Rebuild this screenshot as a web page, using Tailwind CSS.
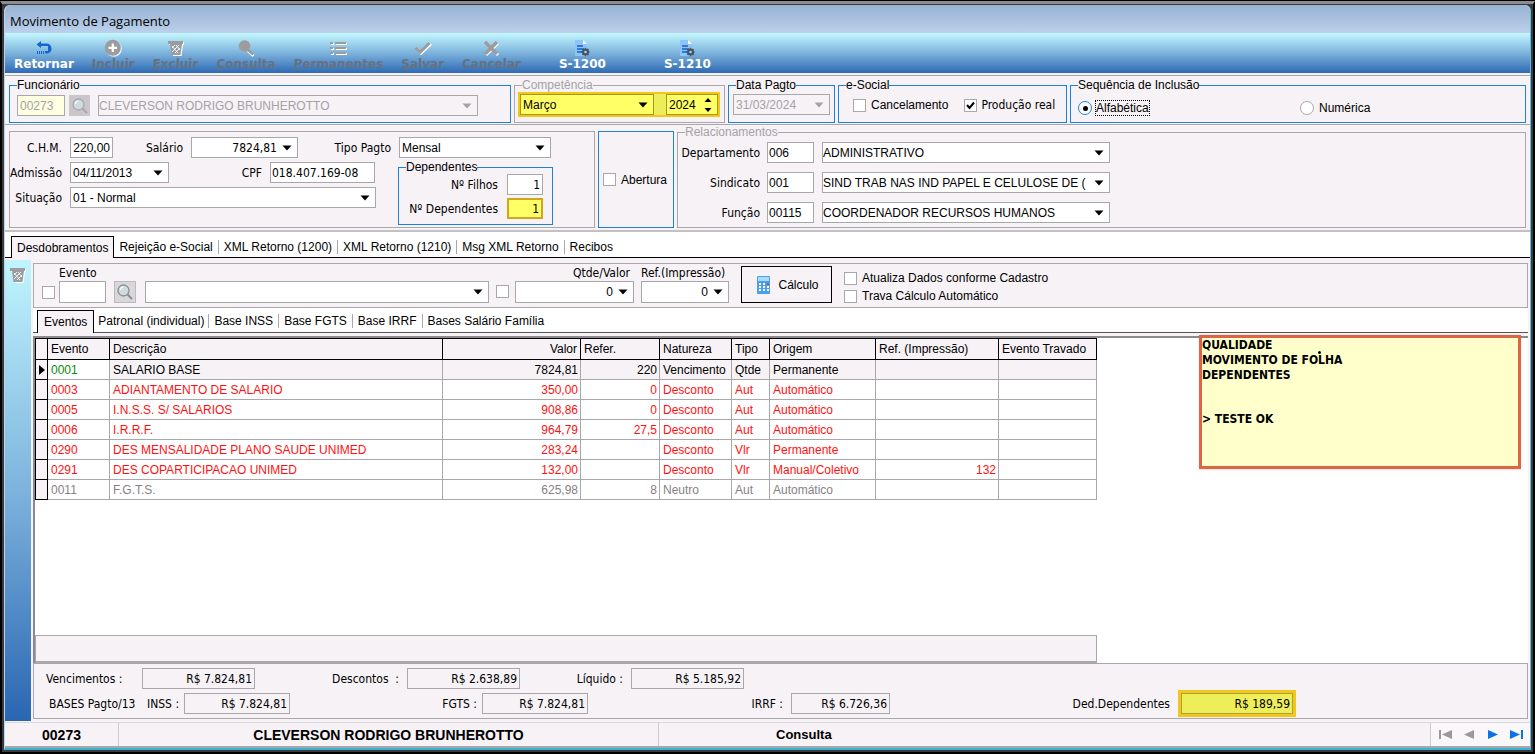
<!DOCTYPE html>
<html lang="pt-BR">
<head>
    <meta charset="UTF-8">
    <meta name="viewport" content="width=device-width, initial-scale=1.0">
    <title>Movimento de Pagamento</title>
    <script src="https://cdn.jsdelivr.net/npm/@tailwindcss/browser@4"></script>
</head>
<body class="flex min-h-screen flex-col bg-black pt-px font-['Liberation_Sans',sans-serif] text-[12px] leading-[14px] text-black">
    <!-- Shared icons -->
    <svg class="hidden">
        <symbol id="arrow" viewBox="0 0 10 6"><path d="M0.5 0.5h9L5 5.5z" fill="currentColor"/></symbol>
        <symbol id="trash" viewBox="0 0 18 18">
            <path d="M2 3h15v3h-1l-1.500 11h-8.500L4 6H2z" fill="#fff"/>
            <path d="M1 2h15v3h-1l-1.500 11h-9L3 5H1z" fill="#9c9c9f"/>
            <path d="M5 7l6 7M9 6l4 5M12 6l-7 7M8 6l-3 3M13 9l-5 5" stroke="#e8f4f8" stroke-width="1"/>
        </symbol>
        <symbol id="doc" viewBox="0 0 18 18">
            <path d="M2 1h8l4 4v12H2z" fill="#8cc4fb"/>
            <path d="M10 1l4 4h-4z" fill="#fff"/>
            <path d="M4 7h6M4 10h7M4 13h5" stroke="#1461c4" stroke-width="1.500"/>
            <circle cx="12.500" cy="13" r="2.500" fill="none" stroke="#46535f" stroke-width="2"/>
            <path d="M12.500 8.800v8.400M8.300 13h8.400M9.500 10l6 6M15.500 10l-6 6" stroke="#46535f" stroke-width="1.200"/>
            <circle cx="12.500" cy="13" r="1.300" fill="#a9d0ef"/>
        </symbol>
        <symbol id="lens" viewBox="0 0 18 18">
            <path d="M11 11l5 5" stroke="currentColor" stroke-width="2"/>
            <circle cx="7.500" cy="7.500" r="5.500" fill="#cfdcdf" stroke="currentColor" stroke-width="1.300"/>
            <path d="M4.500 7a3 3 0 0 1 3-3" fill="none" stroke="#fff" stroke-width="1.200"/>
        </symbol>
    </svg>

    <div class="flex flex-1 flex-col border-x-2 border-b-2 border-t-[3px] border-black border-t-[#8e8b90] bg-[#3c3a3e] px-[2px] pt-px pb-[2px]">
        <div class="flex flex-1 flex-col rounded-t-md border-x border-b-2 border-l-[#b8d4ee] border-r-[#4fc3e0] border-b-[#35b5d3] bg-[#f6f2f6]">
            <h1 class="flex h-7 shrink-0 items-center rounded-t-md bg-linear-to-b from-[#98b2d2] to-[#bbd1ec] pl-[5px] pt-1 font-['Open_Sans',sans-serif] text-[13px]">Movimento de Pagamento</h1>

            <!-- Toolbar -->
            <nav class="flex h-10 shrink-0 items-start gap-[18px] bg-linear-to-b from-[#c4f8fe] via-[#7db3dc] to-[#2e69b4] pl-[9px] pt-[6px] font-['DejaVu_Sans',sans-serif] text-[12px] font-bold text-[#66727d]">
                <button class="flex flex-col items-center text-white">
                    <svg class="size-[18px]" viewBox="0 0 18 18"><path d="M6 2L1.500 5.500 6 9V7h7v5h-3v2.500h2a4.500 4.500 0 0 0 4.500-4.700A5 5 0 0 0 12 4.500H6z" fill="#1467cf"/><path d="M2.500 12v3M4.500 12v3M6.500 12v3M8.500 12v3" stroke="#1467cf"/></svg>
                    <span>Retornar</span>
                </button>
                <button class="flex flex-col items-center" disabled>
                    <svg class="size-[18px]" viewBox="0 0 18 18"><circle cx="9.800" cy="9.800" r="8" fill="#e9f4fa"/><circle cx="8.800" cy="8.800" r="8" fill="#9c9c9f"/><path d="M8.800 4.500v8.600M4.500 8.800h8.600" stroke="#fff" stroke-width="2.200"/></svg>
                    <span><u>I</u>ncluir</span>
                </button>
                <button class="flex flex-col items-center" disabled>
                    <svg class="size-[18px]"><use href="#trash"/></svg>
                    <span><u>E</u>xcluir</span>
                </button>
                <button class="flex flex-col items-center" disabled>
                    <svg class="size-[18px]" viewBox="0 0 18 18"><path d="M11 12l5.500 5" stroke="#fff" stroke-width="2.500"/><path d="M10 10l6 5.500" stroke="#9c9c9f" stroke-width="2.500"/><circle cx="7.500" cy="7" r="5.800" fill="#9c9c9f"/></svg>
                    <span><u>C</u>onsulta</span>
                </button>
                <button class="flex flex-col items-center" disabled>
                    <svg class="size-[18px]" viewBox="0 0 18 18"><path d="M2 5h3M7 5h11M2 10h3M7 10h11M2 15h3M7 15h11" stroke="#fff" stroke-width="2"/><path d="M1 4h3M6 4h11M1 9h3M6 9h11M1 14h3M6 14h11" stroke="#9c9c9f" stroke-width="2"/></svg>
                    <span><u>P</u>ermanentes</span>
                </button>
                <button class="flex flex-col items-center" disabled>
                    <svg class="size-[18px]" viewBox="0 0 18 18"><path d="M2.500 10l4.500 4.500L17 5" fill="none" stroke="#fff" stroke-width="2.500"/><path d="M1.500 9L6 13.500 15.500 4" fill="none" stroke="#9c9c9f" stroke-width="3"/></svg>
                    <span><u>S</u>alvar</span>
                </button>
                <button class="flex flex-col items-center" disabled>
                    <svg class="size-[18px]" viewBox="0 0 18 18"><path d="M4 4l12 12M16 4L4 16" stroke="#fff" stroke-width="3"/><path d="M3 3l12 12M15 3L3 15" stroke="#9c9c9f" stroke-width="3.500"/></svg>
                    <span>Cancelar</span>
                </button>
                <button class="flex flex-col items-center px-5 text-white">
                    <svg class="size-[18px]"><use href="#doc"/></svg>
                    <span>S-1200</span>
                </button>
                <button class="flex flex-col items-center px-5 text-white">
                    <svg class="size-[18px]"><use href="#doc"/></svg>
                    <span>S-1210</span>
                </button>
            </nav>

            <!-- Filters -->
            <form class="mt-[2px] flex h-[50px] shrink-0 gap-[3px] border-y border-[#aaa7ab] px-1 pt-[2px] pb-px">
                <fieldset class="w-[502px] border border-[#1c82d8] pl-[7px] pr-8">
                    <legend>Funcionário</legend>
                    <div class="flex items-center gap-1 pt-[3px]">
                        <input aria-label="Código" value="00273" disabled class="h-[21px] w-12 border border-[#aaa7ab] bg-[#ffffe1] px-[2px] text-[#a5a2a6]">
                        <button type="button" aria-label="Buscar funcionário" disabled class="flex size-[21px] items-center justify-center bg-[#c9c7ca] text-[#aaa7ab]"><svg class="size-[18px]"><use href="#lens"/></svg></button>
                        <div class="relative ml-1 flex-1">
                            <select aria-label="Funcionário" disabled class="h-[21px] w-full appearance-none border border-[#aaa7ab] px-0 text-[#a5a2a6] opacity-100"><option>CLEVERSON RODRIGO BRUNHEROTTO</option></select>
                            <svg class="pointer-events-none absolute right-[6px] top-2 h-[6px] w-[10px] text-[#a5a2a6]"><use href="#arrow"/></svg>
                        </div>
                    </div>
                </fieldset>
                <fieldset class="w-[211px] border border-[#aaa7ab] pl-[3px] pr-1">
                    <legend class="ml-1 text-[#a5a2a6]">Competência</legend>
                    <div class="flex items-center gap-3 border-2 border-[#f5c61a] bg-[#eded5a]">
                        <div class="relative flex-1">
                            <select aria-label="Mês" class="h-[21px] w-full appearance-none border border-[#a09a20] bg-[#ffff66] px-[2px]"><option>Março</option></select>
                            <svg class="pointer-events-none absolute right-[6px] top-2 h-[6px] w-[10px]"><use href="#arrow"/></svg>
                        </div>
                        <div class="relative w-[52px]">
                            <input aria-label="Ano" value="2024" class="h-[21px] w-full border border-[#a09a20] bg-[#ffff66] px-[2px]">
                            <svg class="pointer-events-none absolute right-[6px] top-1 h-[14px] w-[8px]" viewBox="0 0 8 14"><path d="M4 0l3.500 4h-7zM4 14l3.500-4h-7z"/></svg>
                        </div>
                    </div>
                </fieldset>
                <fieldset class="w-[107px] border border-[#1c82d8] px-[4px]">
                    <legend class="ml-[3px]">Data Pagto</legend>
                    <div class="relative pt-[2px]">
                        <input aria-label="Data Pagto" value="31/03/2024" disabled class="h-[21px] w-full border border-[#aaa7ab] px-[2px] text-[#a5a2a6]">
                        <svg class="pointer-events-none absolute right-[6px] top-[10px] h-[6px] w-[10px] text-[#a5a2a6]"><use href="#arrow"/></svg>
                    </div>
                </fieldset>
                <fieldset class="w-[229px] border border-[#1c82d8] pl-[14px]">
                    <legend class="-ml-[7px]">e-Social</legend>
                    <div class="flex items-center gap-4 pt-[6px]">
                        <label class="flex items-center gap-[5px]"><input type="checkbox" class="size-[13px] appearance-none border border-[#aaa7ab] bg-white">Cancelamento</label>
                        <label class="relative flex items-center gap-1 font-['DejaVu_Sans_Condensed','Noto_Sans',sans-serif] text-[12px]">
                            <input type="checkbox" checked class="size-[13px] appearance-none border border-[#aaa7ab] bg-white">
                            <svg class="pointer-events-none absolute left-px top-[2px] size-[11px]" viewBox="0 0 11 11"><path d="M2 5l2.500 3L9 2.500" fill="none" stroke="#000" stroke-width="2"/></svg>
                            Produção real
                        </label>
                    </div>
                </fieldset>
                <fieldset class="flex-1 border border-[#1c82d8] pl-[7px]">
                    <legend>Sequência de Inclusão</legend>
                    <div class="flex items-center pt-[9px]">
                        <label class="flex w-[222px] items-center gap-1"><input type="radio" name="seq" checked class="flex size-[14px] appearance-none items-center justify-center rounded-full border border-[#1c82d8] bg-white before:size-[5px] before:rounded-full before:bg-black before:content-['']"><span class="outline outline-dotted outline-black">Alfabética</span></label>
                        <label class="flex items-center gap-[5px]"><input type="radio" name="seq" class="size-[14px] appearance-none rounded-full border border-[#aaa7ab] bg-white">Numérica</label>
                    </div>
                </fieldset>
            </form>

            <!-- Employee data -->
            <form class="flex h-[107px] shrink-0 gap-[3px] border-b-2 border-[#c3c0c4] pl-1 pr-1 font-['DejaVu_Sans_Condensed','Noto_Sans',sans-serif] text-[12px]">
                <div class="mt-[6px] mb-[2px] w-[586px] border border-[#aaa7ab] pt-[5px]">
                    <div class="flex items-center">
                        <label for="chm" class="w-[52px] text-right">C.H.M.</label>
                        <input id="chm" value="220,00" class="ml-2 h-[21px] w-[43px] border border-[#aaa7ab] bg-white px-[2px] text-right font-['Liberation_Sans']">
                        <label for="sal" class="w-[70px] text-right">Salário</label>
                        <div class="relative ml-2 w-[107px]">
                            <input id="sal" value="7824,81" class="h-[21px] w-full border border-[#aaa7ab] bg-white pr-5 text-right">
                            <svg class="pointer-events-none absolute right-[6px] top-2 h-[6px] w-[10px]"><use href="#arrow"/></svg>
                        </div>
                        <label for="tipo" class="w-[93px] text-right">Tipo Pagto</label>
                        <div class="relative ml-2 w-[152px]">
                            <select id="tipo" class="h-[21px] w-full appearance-none border border-[#aaa7ab] bg-white px-[2px] font-['Liberation_Sans']"><option>Mensal</option></select>
                            <svg class="pointer-events-none absolute right-[6px] top-2 h-[6px] w-[10px]"><use href="#arrow"/></svg>
                        </div>
                    </div>
                    <div class="flex">
                        <div class="flex w-[388px] flex-col gap-1 pt-1">
                            <div class="flex items-center">
                                <label for="adm" class="w-[52px] text-right">Admissão</label>
                                <div class="relative ml-2 w-[99px]">
                                    <input id="adm" value="04/11/2013" class="h-[21px] w-full border border-[#aaa7ab] bg-white px-[2px] font-['Liberation_Sans']">
                                    <svg class="pointer-events-none absolute right-[6px] top-2 h-[6px] w-[10px]"><use href="#arrow"/></svg>
                                </div>
                                <label for="cpf" class="w-[93px] text-right">CPF</label>
                                <input id="cpf" value="018.407.169-08" class="ml-2 h-[21px] w-[105px] border border-[#aaa7ab] bg-white px-px">
                            </div>
                            <div class="flex items-center">
                                <label for="sit" class="w-[52px] text-right">Situação</label>
                                <div class="relative ml-2 w-[306px]">
                                    <select id="sit" class="h-[21px] w-full appearance-none border border-[#aaa7ab] bg-white px-[2px] font-['Liberation_Sans']"><option>01 - Normal</option></select>
                                    <svg class="pointer-events-none absolute right-[6px] top-2 h-[6px] w-[10px]"><use href="#arrow"/></svg>
                                </div>
                            </div>
                        </div>
                        <fieldset class="mt-[2px] h-[65px] w-[155px] border border-[#1c82d8]">
                            <legend class="ml-[7px] font-['Liberation_Sans']">Dependentes</legend>
                            <div class="flex flex-col gap-[3px] pr-[9px]">
                                <div class="flex items-center justify-end gap-[9px]">
                                    <label for="filhos">Nº Filhos</label>
                                    <input id="filhos" value="1" class="h-[21px] w-9 border border-[#aaa7ab] bg-white px-[2px] text-right">
                                </div>
                                <div class="flex items-center justify-end gap-[9px]">
                                    <label for="deps">Nº Dependentes</label>
                                    <input id="deps" value="1" class="h-[21px] w-9 border-2 border-[#cfa61c] bg-[#ffff66] px-[2px] text-right">
                                </div>
                            </div>
                        </fieldset>
                    </div>
                </div>
                <div class="mt-[6px] mb-[2px] flex w-[76px] items-center border border-[#1c82d8] pl-1">
                    <label class="flex items-center gap-[5px] font-['Liberation_Sans']"><input type="checkbox" class="size-[13px] appearance-none border border-[#aaa7ab] bg-white">Abertura</label>
                </div>
                <fieldset class="mb-[2px] flex-1 border border-[#aaa7ab]">
                    <legend class="ml-[7px] font-['Liberation_Sans'] text-[#a5a2a6]">Relacionamentos</legend>
                    <div class="flex flex-col gap-[9px] pt-[3px]">
                        <div class="flex items-center">
                            <label for="dep" class="w-[82px] text-right">Departamento</label>
                            <input id="dep" value="006" class="ml-[7px] h-[21px] w-[47px] border border-[#aaa7ab] bg-white px-px font-['Liberation_Sans']">
                            <div class="relative ml-2 w-[288px]">
                                <select aria-label="Departamento" class="h-[21px] w-full appearance-none border border-[#aaa7ab] bg-white pl-0 pr-5 font-['Liberation_Sans']"><option>ADMINISTRATIVO</option></select>
                                <svg class="pointer-events-none absolute right-[6px] top-2 h-[6px] w-[10px]"><use href="#arrow"/></svg>
                            </div>
                        </div>
                        <div class="flex items-center">
                            <label for="sind" class="w-[82px] text-right">Sindicato</label>
                            <input id="sind" value="001" class="ml-[7px] h-[21px] w-[47px] border border-[#aaa7ab] bg-white px-px font-['Liberation_Sans']">
                            <div class="relative ml-2 w-[288px]">
                                <select aria-label="Sindicato" class="h-[21px] w-full appearance-none border border-[#aaa7ab] bg-white pl-0 pr-5 font-['Liberation_Sans']"><option>SIND TRAB NAS IND PAPEL E CELULOSE DE (</option></select>
                                <svg class="pointer-events-none absolute right-[6px] top-2 h-[6px] w-[10px]"><use href="#arrow"/></svg>
                            </div>
                        </div>
                        <div class="flex items-center">
                            <label for="func" class="w-[82px] text-right">Função</label>
                            <input id="func" value="00115" class="ml-[7px] h-[21px] w-[47px] border border-[#aaa7ab] bg-white px-px font-['Liberation_Sans']">
                            <div class="relative ml-2 w-[288px]">
                                <select aria-label="Função" class="h-[21px] w-full appearance-none border border-[#aaa7ab] bg-white pl-0 pr-5 font-['Liberation_Sans']"><option>COORDENADOR RECURSOS HUMANOS</option></select>
                                <svg class="pointer-events-none absolute right-[6px] top-2 h-[6px] w-[10px]"><use href="#arrow"/></svg>
                            </div>
                        </div>
                    </div>
                </fieldset>
            </form>

            <!-- Main tabs -->
            <div class="flex h-[26px] shrink-0 items-end bg-white" role="tablist">
                <div class="w-[6px] border-b border-black"></div>
                <button class="h-[22px] border border-b-0 border-black bg-[#f6f2f6] px-[5px]">Desdobramentos</button>
                <div class="flex h-[22px] flex-1 items-center border-b border-black">
                    <button class="px-[5px]">Rejeição e-Social</button>
                    <button class="border-l border-[#aaa7ab] px-[5px]">XML Retorno (1200)</button>
                    <button class="border-l border-[#aaa7ab] px-[5px]">XML Retorno (1210)</button>
                    <button class="border-l border-[#aaa7ab] px-[5px]">Msg XML Retorno</button>
                    <button class="border-l border-[#aaa7ab] px-[5px]">Recibos</button>
                </div>
            </div>

            <div class="mt-[2px] flex flex-1">
                <aside class="w-[26px] shrink-0 bg-linear-to-b from-[#c0f5fe] via-[#7db3dc] to-[#2a66b2] pl-1 pt-[6px]">
                    <button aria-label="Excluir evento" disabled><svg class="size-[18px]"><use href="#trash"/></svg></button>
                </aside>
                <div class="relative flex flex-1 flex-col pl-[2px] pr-[2px] pb-[2px]">
                    <!-- Event entry -->
                    <form class="mt-[3px] flex h-[45px] shrink-0 items-end border border-[#aaa7ab] pb-1 pl-2">
                        <input type="checkbox" aria-label="Evento" class="mb-1 size-[13px] appearance-none border border-[#aaa7ab] bg-white">
                        <div class="ml-1 flex w-[47px] flex-col gap-px">
                            <label for="evento" class="font-['DejaVu_Sans_Condensed','Noto_Sans',sans-serif] text-[12px]">Evento</label>
                            <input id="evento" class="h-[22px] border border-[#aaa7ab] bg-white px-[2px]">
                        </div>
                        <button type="button" aria-label="Buscar evento" class="ml-2 flex size-[22px] items-center justify-center border border-[#bdbabe] bg-[#d9d7da] text-[#8a8f93]"><svg class="size-[18px]"><use href="#lens"/></svg></button>
                        <div class="relative ml-[9px] w-[344px]">
                            <select aria-label="Descrição do evento" class="block h-[22px] w-full appearance-none border border-[#aaa7ab] bg-white"><option></option></select>
                            <svg class="pointer-events-none absolute right-[6px] top-2 h-[6px] w-[10px]"><use href="#arrow"/></svg>
                        </div>
                        <input type="checkbox" aria-label="Qtde/Valor" class="mb-[5px] ml-[7px] size-[13px] appearance-none border border-[#aaa7ab] bg-white">
                        <div class="ml-[6px] flex w-[119px] flex-col gap-px">
                            <label for="qtde" class="pr-1 text-right font-['DejaVu_Sans_Condensed','Noto_Sans',sans-serif] text-[12px]">Qtde/Valor</label>
                            <div class="relative">
                                <input id="qtde" value="0" class="block h-[22px] w-full border border-[#aaa7ab] bg-white pr-5 text-right">
                                <svg class="pointer-events-none absolute right-[6px] top-2 h-[6px] w-[10px]"><use href="#arrow"/></svg>
                            </div>
                        </div>
                        <div class="ml-[7px] flex w-[88px] flex-col gap-px">
                            <label for="refimp" class="whitespace-nowrap font-['DejaVu_Sans_Condensed','Noto_Sans',sans-serif] text-[12px]">Ref.(Impressão)</label>
                            <div class="relative">
                                <input id="refimp" value="0" class="block h-[22px] w-full border border-[#aaa7ab] bg-white pr-5 text-right">
                                <svg class="pointer-events-none absolute right-[6px] top-2 h-[6px] w-[10px]"><use href="#arrow"/></svg>
                            </div>
                        </div>
                        <button type="button" class="ml-3 flex h-[37px] w-[91px] items-center justify-center gap-1 border border-black">
                            <svg class="size-5" viewBox="0 0 20 20"><rect x="3" y="1" width="13" height="18" rx="1" fill="#4aa0ec"/><rect x="4" y="2" width="11" height="4" fill="#a8dcfb"/><path d="M5 9h2M9 9h2M5 12h2M9 12h2M13 12h2M5 15h2M9 15h2M13 15h2" stroke="#fff" stroke-width="2"/><path d="M13 9h2" stroke="#d8434e" stroke-width="2"/></svg>
                            <span>Cálculo</span>
                        </button>
                        <div class="ml-3 flex flex-col gap-1">
                            <label class="flex items-center gap-[5px]"><input type="checkbox" class="size-[13px] appearance-none border border-[#aaa7ab] bg-white">Atualiza Dados conforme Cadastro</label>
                            <label class="flex items-center gap-[5px]"><input type="checkbox" class="size-[13px] appearance-none border border-[#aaa7ab] bg-white">Trava Cálculo Automático</label>
                        </div>
                    </form>

                    <!-- Event tabs -->
                    <div class="flex h-[25px] shrink-0 items-end bg-white" role="tablist">
                        <div class="w-[4px] border-b border-[#555]"></div>
                        <button class="h-[23px] border border-b-0 border-black bg-[#f6f2f6] px-[6px]">Eventos</button>
                        <div class="flex h-[23px] flex-1 items-center border-b border-[#555]">
                            <button class="px-1">Patronal (individual)</button>
                            <button class="border-l border-[#aaa7ab] px-[5px]">Base INSS</button>
                            <button class="border-l border-[#aaa7ab] px-[5px]">Base FGTS</button>
                            <button class="border-l border-[#aaa7ab] px-[5px]">Base IRRF</button>
                            <button class="border-l border-[#aaa7ab] px-[5px]">Bases Salário Família</button>
                        </div>
                    </div>

                    <!-- Event grid -->
                    <div class="mt-[3px] flex flex-1 flex-col justify-between border-l-2 border-t-2 border-[#8d8a8e] bg-white">
                        <table class="w-[1062px] table-fixed border-collapse text-left">
                            <colgroup>
                                <col class="w-[12px]"><col class="w-[62px]"><col class="w-[333px]"><col class="w-[138px]"><col class="w-[79px]"><col class="w-[72px]"><col class="w-[38px]"><col class="w-[106px]"><col class="w-[123px]"><col class="w-[98px]">
                            </colgroup>
                            <thead class="bg-[#f6f2f6] [&_th]:h-[21px] [&_th]:border [&_th]:border-black [&_th]:px-[3px] [&_th]:font-normal [&_th]:whitespace-nowrap">
                                <tr>
                                    <th></th><th>Evento</th><th>Descrição</th><th class="text-right">Valor</th><th>Refer.</th><th>Natureza</th><th>Tipo</th><th>Origem</th><th>Ref. (Impressão)</th><th>Evento Travado</th>
                                </tr>
                            </thead>
                            <tbody id="eventos"></tbody>
                        </table>
                        <div class="h-[28px] w-[1062px] border border-b-2 border-[#aaa7ab] bg-[#f6f2f6]"></div>
                    </div>

                    <!-- Totals -->
                    <div class="flex h-[56px] shrink-0 flex-col gap-1 border-x border-b border-t border-[#aaa7ab] pt-1 font-['DejaVu_Sans_Condensed','Noto_Sans',sans-serif] text-[12px]">
                        <div class="flex items-center pl-3">
                            <label for="venc" class="w-24">Vencimentos :</label>
                            <input id="venc" readonly value="R$ 7.824,81" class="h-[21px] w-[113px] border border-[#aaa7ab] px-[2px] text-right">
                            <label for="desc" class="w-[152px] pr-2 text-right">Descontos &nbsp;:</label>
                            <input id="desc" readonly value="R$ 2.638,89" class="h-[21px] w-[113px] border border-[#aaa7ab] px-[2px] text-right">
                            <label for="liq" class="w-[111px] pr-2 text-right">Líquido :</label>
                            <input id="liq" readonly value="R$ 5.185,92" class="h-[21px] w-[113px] border border-[#aaa7ab] px-[2px] text-right">
                        </div>
                        <div class="flex items-center pl-[15px]">
                            <span class="w-[98px]">BASES Pagto/13</span>
                            <label for="inss" class="w-[37px]">INSS :</label>
                            <input id="inss" readonly value="R$ 7.824,81" class="h-[21px] w-[106px] border border-[#aaa7ab] px-[2px] text-right">
                            <label for="fgts" class="w-[192px] pr-[5px] text-right">FGTS :</label>
                            <input id="fgts" readonly value="R$ 7.824,81" class="h-[21px] w-[106px] border border-[#aaa7ab] px-[2px] text-right">
                            <label for="irrf" class="w-[203px] pr-2 text-right">IRRF :</label>
                            <input id="irrf" readonly value="R$ 6.726,36" class="h-[21px] w-[99px] border border-[#aaa7ab] px-[2px] text-right">
                            <label for="ded" class="w-[288px] pr-2 text-right">Ded.Dependentes</label>
                            <div class="-my-1 border-[3px] border-[#f5c61a] bg-[#eeee5a]">
                                <input id="ded" readonly value="R$ 189,59" class="block h-[21px] w-[112px] border border-[#a5a33a] px-[2px] text-right">
                            </div>
                        </div>
                    </div>

                    <!-- Sticky note over the grid -->
                    <div class="absolute right-[9px] top-[75px] h-[134px] w-[322px] border-[3px] border-[#dc6543] bg-[#ffffcc] font-['DejaVu_Sans_Condensed','Noto_Sans',sans-serif] text-[12px] leading-[15px] font-bold shadow">
                        <p>QUALIDADE</p>
                        <p>MOVIMENTO DE FOLHA</p>
                        <p>DEPENDENTES</p>
                        <p class="mt-[29px]">&gt; TESTE OK</p>
                        <span class="absolute left-[116px] top-[13px] size-[3px] rounded-full bg-black"></span>
                    </div>
                </div>
            </div>

            <!-- Status bar -->
            <footer class="mt-px flex h-[26px] shrink-0 items-stretch border-t border-b-2 border-t-[#dcd9dd] border-b-[#aaa7ab] text-[14px] font-bold">
                <div class="flex w-[114px] items-center justify-center border-r border-[#cfccd0]">00273</div>
                <div class="flex w-[540px] items-center justify-center border-r border-[#cfccd0]">CLEVERSON RODRIGO BRUNHEROTTO</div>
                <div class="flex flex-1 items-center pl-[117px] text-[13px]">Consulta</div>
                <div class="flex w-[100px] items-center justify-center gap-3 border-l border-[#cfccd0] bg-[#f9f7f9]">
                    <button aria-label="Primeiro" class="text-[#9b989c]"><svg class="h-[11px] w-[13px]" viewBox="0 0 13 11" fill="currentColor"><path d="M0 1h2v9H0zM13 1v9L3 5.500z"/></svg></button>
                    <button aria-label="Anterior" class="text-[#9b989c]"><svg class="h-[11px] w-[11px]" viewBox="0 0 11 11" fill="currentColor"><path d="M10 1v9L0 5.500z"/></svg></button>
                    <button aria-label="Próximo" class="text-[#0a74e6]"><svg class="h-[11px] w-[11px]" viewBox="0 0 11 11" fill="currentColor"><path d="M1 1v9l10-4.500z"/></svg></button>
                    <button aria-label="Último" class="text-[#0a74e6]"><svg class="h-[11px] w-[13px]" viewBox="0 0 13 11" fill="currentColor"><path d="M11 1h2v9h-2zM0 1v9l10-4.500z"/></svg></button>
                </div>
            </footer>
        </div>
    </div>

    <script>
        // code, description, value, reference, nature, type, origin, printed ref.
        const eventos = [
            ['0001', 'SALARIO BASE', '7824,81', '220', 'Vencimento', 'Qtde', 'Permanente', ''],
            ['0003', 'ADIANTAMENTO DE SALARIO', '350,00', '0', 'Desconto', 'Aut', 'Automático', ''],
            ['0005', 'I.N.S.S. S/ SALARIOS', '908,86', '0', 'Desconto', 'Aut', 'Automático', ''],
            ['0006', 'I.R.R.F.', '964,79', '27,5', 'Desconto', 'Aut', 'Automático', ''],
            ['0290', 'DES MENSALIDADE PLANO SAUDE UNIMED', '283,24', '', 'Desconto', 'Vlr', 'Permanente', ''],
            ['0291', 'DES COPARTICIPACAO UNIMED', '132,00', '', 'Desconto', 'Vlr', 'Manual/Coletivo', '132'],
            ['0011', 'F.G.T.S.', '625,98', '8', 'Neutro', 'Aut', 'Automático', '']
        ];
        const cores = { Vencimento: 'bg-[#f6f2f6] text-black', Desconto: 'text-[#ff1111]', Neutro: 'text-[#858286]' };
        const cell = 'h-5 border border-[#aaa7ab] pl-[3px] pr-[2px] whitespace-nowrap';

        document.getElementById('eventos').innerHTML = eventos.map((e, i) => `
            <tr class="${cores[e[4]]}">
                <td class="h-5 border border-black bg-[#f6f2f6]">${i === 0 ? '<svg class="mx-auto h-[10px] w-[6px]" viewBox="0 0 6 10"><path d="M0 0l6 5-6 5z"/></svg>' : ''}</td>
                <td class="${cell} ${i === 0 ? 'bg-white text-[#0a8a0a]' : ''}">${e[0]}</td>
                <td class="${cell}">${e[1]}</td>
                <td class="${cell} text-right">${e[2]}</td>
                <td class="${cell} text-right">${e[3]}</td>
                <td class="${cell}">${e[4]}</td>
                <td class="${cell}">${e[5]}</td>
                <td class="${cell}">${e[6]}</td>
                <td class="${cell} text-right">${e[7]}</td>
                <td class="${cell}"></td>
            </tr>
        `).join('');
    </script>
</body>
</html>
